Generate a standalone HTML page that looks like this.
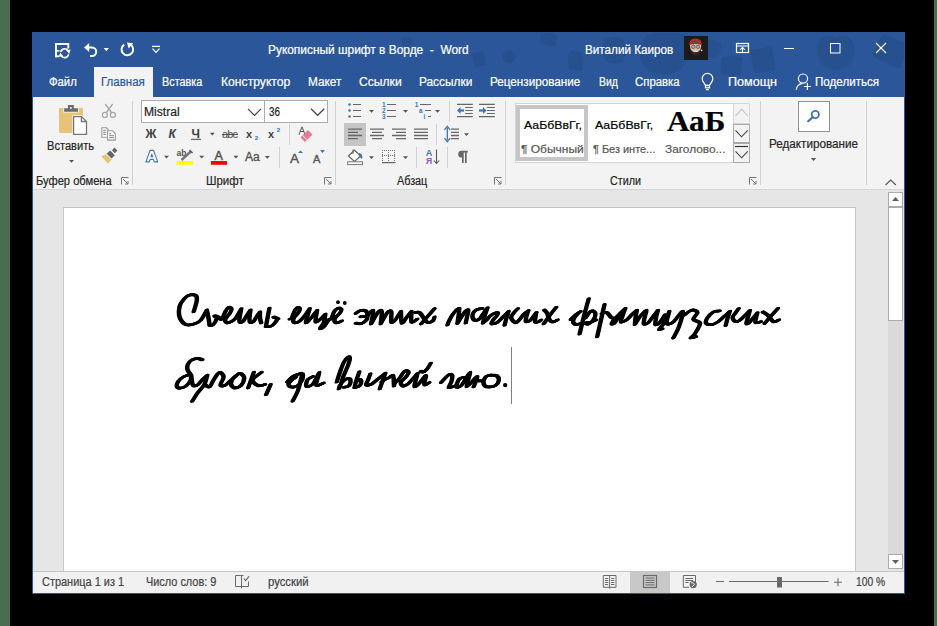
<!DOCTYPE html>
<html><head><meta charset="utf-8">
<style>
*{margin:0;padding:0;box-sizing:border-box}
html,body{width:937px;height:626px;overflow:hidden;background:#000}
body{position:relative;font-family:"Liberation Sans",sans-serif}
.a{position:absolute}
.t{position:absolute;white-space:nowrap;line-height:1;font-size:12px;transform-origin:0 0;-webkit-text-stroke:0.2px currentColor}
.w{color:#fff}
.k{color:#262626}
.g{color:#444}
svg{position:absolute;left:0;top:0;overflow:visible}
.hw{font-size:36px;font-weight:bold;font-style:italic;color:#000;font-family:"Liberation Serif",serif}
</style></head><body>
<div class="a" style="left:0;top:0;width:10px;height:626px;background:#4b6d4f"></div>
<div class="a" style="left:934px;top:0;width:3px;height:626px;background:#4b6d4f"></div>

<!-- window -->
<div class="a" style="left:32px;top:32px;width:873px;height:562px;background:#2b579a"></div>
<!-- doodles -->
<svg width="937" height="626" style="opacity:1">
<defs><clipPath id="tb"><rect x="33" y="33" width="871" height="64"/></clipPath></defs>
<g fill="#27508e" clip-path="url(#tb)">
 <rect x="540" y="33" width="17" height="12" rx="4" transform="rotate(12 548 39)"/>
 <path d="M568 55 Q570 50 576 51 Q583 52 583 58 L582 69 Q575 72 569 69 Z"/>
 <path d="M604 40 Q615 34 624 40 Q629 52 622 62 Q612 66 605 60 Q600 50 604 40 Z"/>
 <path d="M646 36 Q664 28 684 35 Q692 48 686 62 Q676 78 656 74 Q641 70 640 55 Q640 42 646 36 Z"/>
 <path d="M703 42 Q712 36 722 44 Q722 54 712 58 Q703 56 703 42 Z" opacity="0.8"/>
 <path d="M721 58 Q732 53 742 58 L741 74 Q731 78 721 74 Z"/>
 <rect x="752" y="48" width="22" height="24" rx="3" transform="rotate(-10 763 60)"/>
 <path d="M818 42 Q826 32 836 38 Q846 32 853 42 Q858 58 846 68 Q836 72 826 68 Q814 58 818 42 Z"/>
 <rect x="876" y="38" width="30" height="26" rx="3" transform="rotate(25 891 51)"/>
 <circle cx="407" cy="41.5" r="5.2"/>
 <rect x="473" y="52" width="12" height="14" rx="2" transform="rotate(-12 479 59)"/>
 <circle cx="509" cy="57" r="6.5"/>
 <rect x="569" y="54" width="12" height="15" rx="2" transform="rotate(-10 575 61)"/>
</g>
</svg>
<!-- ribbon -->
<div class="a" style="left:33px;top:97px;width:871px;height:92px;background:#f3f3f3"></div>
<div class="a" style="left:94px;top:67px;width:59px;height:30px;background:#f3f3f3"></div>
<div class="a" style="left:33px;top:189px;width:871px;height:1px;background:#d6d6d6"></div>
<!-- doc area -->
<div class="a" style="left:33px;top:190px;width:871px;height:381px;background:#e6e6e6"></div>
<div class="a" style="left:63px;top:207px;width:793px;height:364px;background:#fff;border:1px solid #c6c6c6;border-bottom:none"></div>
<!-- scrollbar -->
<div class="a" style="left:888px;top:192px;width:15px;height:377px;background:#dadada"></div>
<div class="a" style="left:888px;top:192px;width:15px;height:15px;background:#fff;border:1px solid #ababab"></div>
<div class="a" style="left:888px;top:207px;width:15px;height:114px;background:#fff;border:1px solid #ababab"></div>
<div class="a" style="left:888px;top:554px;width:15px;height:15px;background:#fff;border:1px solid #ababab"></div>
<!-- status bar -->
<div class="a" style="left:33px;top:571px;width:871px;height:1px;background:#c6c6c6"></div>
<div class="a" style="left:33px;top:572px;width:871px;height:21px;background:#f1f1f1"></div>
<div class="a" style="left:630px;top:572px;width:40px;height:21px;background:#c8c8c8"></div>

<!-- ribbon boxes -->
<div class="a" style="left:141px;top:100px;width:124px;height:23px;background:#fff;border:1px solid #ababab"></div>
<div class="a" style="left:264px;top:100px;width:64px;height:23px;background:#fff;border:1px solid #ababab"></div>
<div class="a" style="left:515px;top:103px;width:219px;height:60px;background:#fff;border:1px solid #d4d4d4"></div>
<div class="a" style="left:516px;top:105px;width:72px;height:56px;border:4px solid #c6c6c6"></div>
<div class="a" style="left:733px;top:103px;width:17px;height:21px;background:#f3f3f3;border:1px solid #d6d6d6"></div>
<div class="a" style="left:733px;top:124px;width:17px;height:19px;background:#f3f3f3;border:1px solid #a9a9a9"></div>
<div class="a" style="left:733px;top:143px;width:17px;height:20px;background:#f3f3f3;border:1px solid #a9a9a9"></div>
<div class="a" style="left:798px;top:101px;width:32px;height:31px;background:#fff;border:1px solid #8f8f8f"></div>
<div class="a" style="left:344px;top:123px;width:22px;height:23px;background:#c5c5c5"></div>

<!-- separators -->
<div class="a" style="left:132px;top:101px;width:1px;height:84px;background:#d0d0d0"></div>
<div class="a" style="left:335px;top:101px;width:1px;height:84px;background:#d0d0d0"></div>
<div class="a" style="left:505px;top:101px;width:1px;height:84px;background:#d0d0d0"></div>
<div class="a" style="left:760px;top:101px;width:1px;height:84px;background:#d0d0d0"></div>
<div class="a" style="left:866px;top:101px;width:1px;height:84px;background:#d0d0d0"></div>
<div class="a" style="left:289px;top:124px;width:1px;height:21px;background:#d0d0d0"></div>
<div class="a" style="left:279px;top:147px;width:1px;height:21px;background:#d0d0d0"></div>
<div class="a" style="left:436px;top:124px;width:1px;height:21px;background:#d0d0d0"></div>
<div class="a" style="left:449px;top:101px;width:1px;height:21px;background:#d0d0d0"></div>
<div class="a" style="left:416px;top:147px;width:1px;height:21px;background:#d0d0d0"></div>
<div class="a" style="left:447px;top:147px;width:1px;height:21px;background:#d0d0d0"></div>

<!-- ICONS -->
<svg width="937" height="626" id="icons">
<!-- QAT -->
<g stroke="#fff" fill="none" stroke-width="1.9">
 <path d="M56 57.2 V44 H68.3 V48.5"/>
 <path d="M55.2 56.3 H59"/>
 <path d="M57 50.8 H59.5" stroke-width="1.5"/>
 <path d="M60.8 52 A4 4 0 0 1 68.2 50.8" stroke-width="1.7"/>
 <path d="M68.6 54.4 A4 4 0 0 1 61.2 55.6" stroke-width="1.7"/>
</g>
<g fill="#fff">
 <path d="M66.2 50.2 L70.6 49.6 L69.2 54 Z"/>
 <path d="M63.2 56.2 L58.8 56.8 L60.2 52.4 Z"/>
</g>
<path d="M86 47.5 H92 A4.2 4.2 0 0 1 92 55.9 H90" stroke="#fff" stroke-width="2" fill="none"/>
<path d="M84 47.5 L89.2 43 L89.2 52 Z" fill="#fff"/>
<path d="M103.6 48 H109 L106.3 51 Z" fill="#fff"/>
<path d="M124.2 44.6 A5.8 5.8 0 1 0 130 44.3" stroke="#fff" stroke-width="2" fill="none"/>
<path d="M127 42.6 L133.2 43.2 L128.6 48.6 Z" fill="#fff"/>
<path d="M152 46.4 H160" stroke="#fff" stroke-width="1.3"/>
<path d="M152.5 48.7 L156 52.3 L159.5 48.7" stroke="#fff" stroke-width="1.2" fill="none"/>

<!-- avatar -->
<rect x="684" y="36" width="24" height="24" fill="#1e1a1c"/>
<path d="M689.8 44 Q690 49.5 692 51.5 Q695.5 54 699 51.5 Q701.2 49.5 701.3 44 Z" fill="#dcb79c"/>
<path d="M689.2 45 Q689 38.6 695.5 38.6 Q702 38.6 701.8 45 Q695.5 43.2 689.2 45 Z" fill="#a8302a"/>
<path d="M692.5 41.5 Q695.5 40.5 698.5 41.5 L698 43.5 H693 Z" fill="#5b4a48"/>
<circle cx="693.3" cy="46.8" r="1.7" fill="#9fb0bc" stroke="#3a3a3a" stroke-width="0.6"/>
<circle cx="697.9" cy="46.8" r="1.7" fill="#9fb0bc" stroke="#3a3a3a" stroke-width="0.6"/>
<path d="M691 50 Q693 52.5 695.5 52.2 Q698.5 52.5 700 50 L699.5 54 Q695.5 57.5 691.8 54 Z" fill="#2e2828"/>
<rect x="693.8" y="50.6" width="3.4" height="1" fill="#f0e8e0"/>
<circle cx="701.6" cy="50.3" r="0.9" fill="#eee"/>
<!-- ribbon display options -->
<rect x="736.5" y="43.5" width="12" height="9" stroke="#fff" stroke-width="1.2" fill="none"/>
<path d="M736.5 46 H748.5 M742.5 52.5 V47.8" stroke="#fff" stroke-width="1.1"/>
<path d="M740 50 L742.5 47.3 L745 50" stroke="#fff" stroke-width="1.1" fill="none"/>
<!-- window buttons -->
<path d="M784 48.5 H794" stroke="#fff" stroke-width="1"/>
<rect x="830.5" y="43.5" width="9.5" height="9.5" stroke="#fff" stroke-width="1" fill="none"/>
<path d="M876 43 L886 53 M886 43 L876 53" stroke="#fff" stroke-width="1.1"/>

<!-- lightbulb -->
<g stroke="#fff" stroke-width="1.2" fill="none">
 <path d="M705.6 85.3 L703.6 82.3 A5.3 5.3 0 1 1 711.4 82.3 L709.4 85.3 Z"/>
 <rect x="705.5" y="85.5" width="4" height="2.3"/>
 <path d="M706 89.6 H709"/>
</g>
<!-- person -->
<g stroke="#fff" stroke-width="1.2" fill="none">
 <circle cx="803" cy="78.6" r="4.6"/>
 <path d="M796.3 89.8 Q797 84.2 802.5 83.4"/>
 <path d="M807.4 83 V90 M803.9 86.5 H810.9"/>
</g>

<!-- clipboard -->
<rect x="59" y="108" width="24" height="25" rx="1.2" fill="#e9c27a"/>
<path d="M63.3 107.5 H78.8 V112.6 H63.3 Z" fill="#f3f3f3"/>
<path d="M64.2 108.3 H78 V111.8 H64.2 Z M68 105.1 H73.8 V108.5 H68 Z" fill="#6b6b6b"/>
<circle cx="70.9" cy="108" r="1" fill="#f3f3f3"/>
<path d="M72.3 115.3 H81.9 L87.8 121 V135.7 H72.3 Z" fill="#f3f3f3"/>
<path d="M73.6 116.6 H81.4 L86.5 121.5 V134.4 H73.6 Z" fill="#fff" stroke="#777" stroke-width="1.3"/>
<path d="M81.4 116.6 V121.5 H86.5" fill="none" stroke="#777" stroke-width="1.3"/>
<!-- scissors -->
<g stroke="#a8a8a8" stroke-width="1.3" fill="none">
 <path d="M105.3 104 L111.5 112.5 M112.6 104 L106.5 112.5"/>
 <circle cx="104.9" cy="114.9" r="2.5"/>
 <circle cx="112.9" cy="114.9" r="2.5"/>
</g>
<!-- copy -->
<g stroke="#9a9a9a" stroke-width="1.1" fill="#fff">
 <path d="M101.8 127.8 H106.5 L108 129.3 V137.2 H101.8 Z"/>
 <path d="M107.6 130.8 H112.6 L115.3 133.5 V140.1 H107.6 Z"/>
 <path d="M103.2 130.4 H106 M103.2 132.4 H106 M103.2 134.4 H106 M109.2 133.6 H111 M109.2 135.6 H114 M109.2 137.6 H114" fill="none"/>
</g>
<!-- format painter -->
<path d="M101.2 156.3 L105.8 154.6 L111.6 159.6 L108 163.8 Z" fill="#e9c27a"/>
<path d="M106.6 153.8 L110.2 150.6 L114.8 155.2 L111.6 158.6 Z" fill="#666"/>
<path d="M112 150.2 L114.6 147.6 L117.4 150.4 L114.8 153.2 Z" fill="#666"/>
<!-- paste dropdown -->
<path d="M69 160 H74 L71.5 162.7 Z" fill="#555"/>
<!-- dialog launchers -->
<g stroke="#777" stroke-width="1" fill="none">
 <path d="M121.5 184.5 V177.5 H128.5 M123 179 L128 184 M128 181 V184 H125"/>
 <path d="M324.5 184.5 V177.5 H331.5 M326 179 L331 184 M331 181 V184 H328"/>
 <path d="M494.5 184.5 V177.5 H501.5 M496 179 L501 184 M501 181 V184 H498"/>
 <path d="M749.5 184.5 V177.5 H756.5 M751 179 L756 184 M756 181 V184 H753"/>
</g>
<!-- collapse ribbon -->
<path d="M885.5 185 L890.7 180 L895.9 185" stroke="#555" stroke-width="1.1" fill="none"/>

<!-- font box chevrons -->
<path d="M248 108.8 L254.5 115.3 L261 108.8 M311 108.8 L317.6 115.3 L324.3 108.8" stroke="#444" stroke-width="1.2" fill="none"/>
<!-- B I U -->
<text x="145.6" y="138" font-family="Liberation Sans" font-weight="bold" font-size="12" fill="#404040">Ж</text>
<text x="168.6" y="138" font-family="Liberation Sans" font-weight="bold" font-style="italic" font-size="12" fill="#404040">К</text>
<text x="191.5" y="138" font-family="Liberation Sans" font-weight="bold" font-size="12" fill="#404040">Ч</text>
<path d="M191 139.3 H201" stroke="#404040" stroke-width="1"/>
<text x="222" y="138" font-family="Liberation Sans" font-size="11" fill="#505050" textLength="16">abc</text>
<path d="M222 134.5 H238" stroke="#505050" stroke-width="1"/>
<text x="246" y="137.8" font-family="Liberation Sans" font-weight="bold" font-size="11" fill="#404040">x</text>
<text x="254.8" y="139.8" font-family="Liberation Sans" font-weight="bold" font-size="6" fill="#2f6bb5">2</text>
<text x="268" y="137.8" font-family="Liberation Sans" font-weight="bold" font-size="11" fill="#404040">x</text>
<text x="276.8" y="132.2" font-family="Liberation Sans" font-weight="bold" font-size="6" fill="#2f6bb5">2</text>
<!-- clear formatting -->
<path d="M299 134.7 L302 126.8 L305 134.7 M300 131.5 H304" stroke="#555" stroke-width="1" fill="none"/>
<path d="M300.5 137.5 L308 130 L312.5 134.5 L305 142 Z" fill="#e17d92"/>
<path d="M302.6 135.4 L307 139.8" stroke="#f3f3f3" stroke-width="1"/>
<!-- row 2 font -->
<path d="M145.9 161.9 L150.1 150.4 H153.5 L157.7 161.9 H154.3 L153.4 159.4 H150.2 L149.3 161.9 Z M151 156.7 H152.6 L151.8 154.2 Z" fill="#fff" stroke="#3f73b7" stroke-width="1.1" stroke-linejoin="round" fill-rule="evenodd"/>
<text x="176.6" y="155.8" font-family="Liberation Sans" font-weight="bold" font-size="8.5" fill="#555">ab</text>
<path d="M181.5 160 L190.8 151.5" stroke="#777" stroke-width="2.4"/>
<path d="M189.5 150 L192.5 153" stroke="#555" stroke-width="1.5"/>
<rect x="176.8" y="161" width="16.3" height="3.8" fill="#ffff00"/>
<text x="214.4" y="160.2" font-family="Liberation Sans" font-size="12.5" fill="#555" stroke="#555" stroke-width="0.5">A</text>
<rect x="211" y="161" width="16" height="3.8" fill="#f00"/>
<text x="245" y="161" font-family="Liberation Sans" font-size="12" fill="#555" stroke="#555" stroke-width="0.35">Aa</text>
<text x="290" y="162.7" font-family="Liberation Sans" font-size="13.5" fill="#555" stroke="#555" stroke-width="0.4">A</text>
<path d="M298 153.1 L300.5 150.6 L303 153.1 Z" fill="#3f73b7"/>
<text x="313" y="162.7" font-family="Liberation Sans" font-size="11" fill="#555" stroke="#555" stroke-width="0.4">A</text>
<path d="M320.1 149.9 L325 149.9 L322.5 152.9 Z" fill="#3f73b7"/>
<!-- dropdown triangles -->
<g fill="#555">
 <path d="M209.9 132.8 H214.8 L212.35 135.6 Z"/>
 <path d="M164 155.8 H169 L166.5 158.6 Z"/>
 <path d="M199.2 155.8 H204.2 L201.7 158.6 Z"/>
 <path d="M233.4 155.8 H238.4 L235.9 158.6 Z"/>
 <path d="M264.8 156 H269.8 L267.3 158.8 Z"/>
 <path d="M369 110 H374 L371.5 112.8 Z"/>
 <path d="M403 110 H408 L405.5 112.8 Z"/>
 <path d="M435 110 H440 L437.5 112.8 Z"/>
 <path d="M464 133.3 H469 L466.5 136.1 Z"/>
 <path d="M369 156.3 H374 L371.5 159.1 Z"/>
 <path d="M403 156.3 H408 L405.5 159.1 Z"/>
 <path d="M810.8 158 H816.2 L813.5 160.9 Z"/>
</g>
<!-- bullets -->
<g fill="#3f73b7">
 <circle cx="349.5" cy="104.5" r="1.3"/><circle cx="349.5" cy="110.5" r="1.3"/><circle cx="349.5" cy="116.5" r="1.3"/>
</g>
<g stroke="#666" stroke-width="1.1">
 <path d="M353 104.5 H361 M353 110.5 H361 M353 116.5 H361"/>
 <path d="M387 104.5 H396 M387 110.5 H396 M387 116.5 H396"/>
 <path d="M420 104.5 H431 M425 110.5 H431 M428 116.5 H431"/>
</g>
<g font-family="Liberation Sans" font-weight="bold" font-size="6.5" fill="#3f73b7">
 <text x="382" y="107">1</text><text x="382" y="113">2</text><text x="382" y="119">3</text>
 <text x="414.8" y="107">1</text><text x="419" y="113">a</text><text x="423.5" y="119">i</text>
</g>
<!-- alignment -->
<g stroke="#666" stroke-width="1.3">
 <path d="M348 129.2 H362 M348 132.4 H358 M348 135.5 H362 M348 138.6 H358"/>
 <path d="M370 129.2 H384 M372 132.4 H382 M370 135.5 H384 M372 138.6 H382"/>
 <path d="M392 129.2 H406 M396 132.4 H406 M392 135.5 H406 M396 138.6 H406"/>
 <path d="M414 129.2 H428 M414 132.4 H428 M414 135.5 H428 M414 138.6 H428"/>
 <path d="M451 129.2 H459 M451 132.4 H459 M451 135.5 H459 M451 138.6 H459"/>
</g>
<!-- line spacing arrows -->
<path d="M447.3 127.5 V140.5" stroke="#3f73b7" stroke-width="1.3"/>
<path d="M444.5 129.8 L447.3 126.2 L450.1 129.8 M444.5 138.2 L447.3 141.8 L450.1 138.2" stroke="#3f73b7" stroke-width="1.3" fill="none"/>
<!-- indents -->
<g stroke="#666" stroke-width="1.2">
 <path d="M457 104.4 H472.8 M465.2 107.5 H472.8 M465.2 110.5 H472.8 M465.2 113.5 H472.8 M457 116.6 H472.8"/>
 <path d="M479 104.4 H494.8 M487 107.5 H494.8 M487 110.5 H494.8 M487 113.5 H494.8 M479 116.6 H494.8"/>
</g>
<path d="M459 110.5 H464" stroke="#3f73b7" stroke-width="2.2"/>
<path d="M457 110.5 L460.5 107 L460.5 114 Z" fill="#3f73b7"/>
<path d="M479 110.5 H484" stroke="#3f73b7" stroke-width="2.2"/>
<path d="M486.5 110.5 L483 107 L483 114 Z" fill="#3f73b7"/>
<!-- shading -->
<path d="M348.5 156 L354.5 150.2 L360.5 156 L354.5 161.5 Z" stroke="#666" stroke-width="1.2" fill="#fff"/>
<path d="M353 149.5 V154" stroke="#666" stroke-width="1.1"/>
<path d="M359 153 Q363.5 154 362 159 Q360 157.5 359 156 Z" fill="#3f73b7"/>
<rect x="347.7" y="161.8" width="14.8" height="2.8" stroke="#777" stroke-width="1" fill="#fff"/>
<!-- borders -->
<g stroke="#777" stroke-width="1" stroke-dasharray="1 1" fill="none">
 <path d="M382 150.5 H395 M382 155.5 H395 M382.5 150 V161 M388.5 150 V161 M394.5 150 V161"/>
</g>
<rect x="382" y="162" width="13.5" height="1.2" fill="#666"/>
<!-- sort -->
<text x="425.7" y="155.8" font-family="Liberation Sans" font-weight="bold" font-size="9" fill="#3f73b7">A</text>
<text x="425.7" y="163.7" font-family="Liberation Sans" font-weight="bold" font-size="9" fill="#8e5bb5">Я</text>
<path d="M436.5 149.5 V163.5 M433.8 160.5 L436.5 163.5 L439.2 160.5" stroke="#555" stroke-width="1.1" fill="none"/>
<!-- pilcrow -->
<path d="M467.8 150.8 H461.6 A3.4 3.4 0 0 0 461.6 157.6 H462 V163 H463.7 V152.4 H465 V163 H466.7 V152.4 H467.8 Z" fill="#666"/>
<!-- gallery scroll -->
<path d="M735.5 115.8 L741.6 109.2 L747.7 115.8" stroke="#c3c3c3" stroke-width="1.1" fill="none"/>
<path d="M735.5 130.4 L741.6 136.8 L747.7 130.4" stroke="#444" stroke-width="1.1" fill="none"/>
<path d="M735 146.5 H748" stroke="#333" stroke-width="1.2"/>
<path d="M735.5 151.4 L741.6 157.8 L747.7 151.4" stroke="#444" stroke-width="1.1" fill="none"/>
<!-- search -->
<circle cx="815.3" cy="114.5" r="3.6" stroke="#3f73b7" stroke-width="1.8" fill="none"/>
<path d="M812.6 117.2 L808.2 121.2" stroke="#3f73b7" stroke-width="2.2" stroke-linecap="round"/>
<!-- scrollbar arrows -->
<path d="M892 201 H899 L895.5 197 Z M892 560 H899 L895.5 564 Z" fill="#606060"/>

<!-- status bar icons -->
<g stroke="#6a6a6a" stroke-width="1" fill="none">
 <path d="M235.5 575.5 H241.5 V586.5 H235.5 Z M241.5 575.5 H243.5 M248.5 581.5 V586.5 H241.5 M241.5 586.5 V588.3"/>
 <path d="M243.8 578.6 L245.6 580.6 L249.2 576.2" stroke-width="1.1"/>
 <path d="M603.3 575.5 H616 V587.3 H603.3 Z M609.6 575.5 V588.5 M605 578.5 H608.2 M605 580.5 H608.2 M605 582.5 H608.2 M605 584.5 H608.2 M611 578.5 H614.3 M611 580.5 H614.3 M611 582.5 H614.3 M611 584.5 H614.3"/>
 <rect x="643.5" y="575.5" width="13" height="12" stroke-width="1.2"/>
 <path d="M645.5 578 H654.5 M645.5 580.3 H654.5 M645.5 582.6 H654.5 M645.5 584.9 H654.5"/>
 <path d="M689 587.3 H683.3 V575.5 H695.5 V582 M685.3 578.5 H693 M685.3 580.5 H693 M685.3 582.5 H688.5"/>
</g>
<circle cx="693.2" cy="584.6" r="3.6" fill="#6a6a6a"/>
<path d="M691 583 Q693 582 694.5 584 Q693 586.5 692 587" stroke="#f1f1f1" stroke-width="0.9" fill="none"/>
<path d="M716 581.5 H724 M729 581.5 H828.6 M834 582.3 H842 M838 578.3 V586.3" stroke="#6a6a6a" stroke-width="1.1"/>
<rect x="777" y="577" width="5" height="10.5" fill="#6a6a6a"/>
</svg>

<!-- title text -->
<div id="title" class="t w" style="left:267.6px;top:44px;transform:scaleX(0.992)">Рукописный шрифт в Ворде&nbsp; -&nbsp; Word</div>
<div id="user" class="t w" style="left:584.6px;top:44px;transform:scaleX(0.975)">Виталий Каиров</div>

<!-- tabs -->
<div id="tab0" class="t w" style="left:48.6px;top:76px;transform:scaleX(0.940)">Файл</div>
<div id="tab1" class="t" style="left:100.6px;top:76px;color:#2b579a;transform:scaleX(0.960)">Главная</div>
<div id="tab2" class="t w" style="left:162.4px;top:76px;transform:scaleX(0.904)">Вставка</div>
<div id="tab3" class="t w" style="left:221.0px;top:76px;transform:scaleX(1.013)">Конструктор</div>
<div id="tab4" class="t w" style="left:308.0px;top:76px;transform:scaleX(0.985)">Макет</div>
<div id="tab5" class="t w" style="left:359.0px;top:76px;transform:scaleX(1.010)">Ссылки</div>
<div id="tab6" class="t w" style="left:419.0px;top:76px;transform:scaleX(0.989)">Рассылки</div>
<div id="tab7" class="t w" style="left:490.4px;top:76px;transform:scaleX(0.974)">Рецензирование</div>
<div id="tab8" class="t w" style="left:598.8px;top:76px;transform:scaleX(0.868)">Вид</div>
<div id="tab9" class="t w" style="left:635.0px;top:76px;transform:scaleX(0.948)">Справка</div>
<div id="tab10" class="t w" style="left:727.6px;top:76px;transform:scaleX(1.049)">Помощн</div>
<div id="tab11" class="t w" style="left:815.0px;top:76px;transform:scaleX(0.968)">Поделиться</div>

<!-- ribbon labels -->
<div id="paste" class="t k" style="left:47.0px;top:140px;transform:scaleX(0.925)">Вставить</div>
<div id="g1" class="t k" style="left:36.0px;top:175px;transform:scaleX(0.928)">Буфер обмена</div>
<div id="g2" class="t k" style="left:206.4px;top:175px;transform:scaleX(0.953)">Шрифт</div>
<div id="g3" class="t k" style="left:396.9px;top:175px;transform:scaleX(0.900)">Абзац</div>
<div id="g4" class="t k" style="left:609.8px;top:175px;transform:scaleX(0.894)">Стили</div>
<div id="edit" class="t k" style="left:768.8px;top:138px;transform:scaleX(0.973)">Редактирование</div>
<div id="fname" class="t" style="left:144.0px;top:106px;color:#222;transform:scaleX(1.011)">Mistral</div>
<div id="fsize" class="t" style="left:268.7px;top:106px;color:#222;transform:scaleX(0.821)">36</div>
<div id="st1" class="t" style="left:523.9px;top:120px;color:#000;font-size:11.4px;transform:scaleX(1.078)">АаБбВвГг,</div>
<div id="st2" class="t" style="left:595.3px;top:120px;color:#000;font-size:11.4px;transform:scaleX(1.083)">АаБбВвГг,</div>
<div id="st1b" class="t" style="left:520.6px;top:144px;color:#555;font-size:11.4px;transform:scaleX(1.053)">¶ Обычный</div>
<div id="st2b" class="t" style="left:593.4px;top:144px;color:#555;font-size:11.4px;transform:scaleX(0.960)">¶ Без инте...</div>
<div id="st3b" class="t" style="left:664.8px;top:144px;color:#555;font-size:11.4px;transform:scaleX(1.041)">Заголово...</div>
<div id="st3" class="t" style="left:667.4px;top:106px;color:#000;font-family:'Liberation Serif',serif;font-weight:bold;font-size:30px;transform:scaleX(1.038)">АаБ</div>

<!-- status -->
<div id="s1" class="t g" style="left:42.0px;top:576px;transform:scaleX(0.913)">Страница 1 из 1</div>
<div id="s2" class="t g" style="left:145.6px;top:576px;transform:scaleX(0.909)">Число слов: 9</div>
<div id="s3" class="t g" style="left:267.8px;top:576px;transform:scaleX(0.942)">русский</div>
<div id="s4" class="t g" style="left:855.6px;top:576px;transform:scaleX(0.856)">100 %</div>

<!-- document text -->
<div id="doc" class="a" style="left:0;top:0">
<svg width="937" height="626" id="hw">
<defs><path id="hwp" d="M193.7 311.7 C194.2 310.1 196.0 304.5 196.5 302.0 C197.0 299.5 197.0 297.7 196.5 296.5 C196.0 295.3 195.0 294.9 193.5 294.8 C192.0 294.7 189.4 294.6 187.3 296.0 C185.2 297.4 182.4 300.7 181.0 303.0 C179.6 305.3 179.2 307.5 179.0 310.0 C178.8 312.5 178.8 315.8 180.0 318.2 C181.2 320.6 183.5 323.7 186.1 324.6 C188.7 325.5 193.0 324.4 195.5 323.5 C198.0 322.6 199.4 321.8 201.3 319.5 C203.2 317.2 205.9 311.6 206.8 310.0 M206.8 310.0 C207.1 311.3 208.0 315.4 208.5 318.0 C209.0 320.6 209.4 324.1 209.6 325.3 M209.6 325.3 C210.2 325.2 211.8 325.9 213.0 324.8 C214.2 323.7 216.3 320.0 216.6 318.5 C216.8 317.0 214.2 316.0 214.5 315.8 C214.8 315.6 217.8 317.0 218.5 317.2 M218.5 317.2 C219.0 317.6 220.7 319.8 221.5 319.5 C222.3 319.2 222.8 317.2 223.6 315.7 C224.3 314.2 225.1 311.9 226.0 310.5 C226.9 309.1 227.9 307.4 228.8 307.2 C229.7 307.0 231.5 308.2 231.6 309.3 C231.7 310.4 230.4 312.4 229.5 313.8 C228.6 315.2 226.7 316.8 226.0 318.0 C225.3 319.2 224.9 320.4 225.3 321.2 C225.7 322.0 226.9 323.2 228.6 322.8 C230.3 322.4 233.2 320.9 235.3 318.6 C237.4 316.3 240.3 310.4 241.3 308.8 M241.3 308.8 C241.0 310.3 239.8 315.8 239.5 318.0 C239.2 320.2 239.2 321.4 239.8 322.0 C240.4 322.6 241.9 322.5 243.0 321.5 C244.1 320.5 245.2 317.9 246.5 316.0 C247.8 314.1 249.8 311.0 250.5 310.0 M250.5 310.0 C250.3 311.3 249.6 316.0 249.5 318.0 C249.4 320.0 249.3 321.4 250.0 322.0 C250.7 322.6 252.3 322.5 253.5 321.5 C254.7 320.5 255.9 317.6 257.0 316.0 C258.1 314.4 259.5 312.7 260.0 312.0 M260.0 312.0 C260.0 313.0 259.8 316.2 260.0 318.0 C260.2 319.8 261.0 322.1 261.2 322.9 M269.4 308.2 C268.8 311.2 266.5 323.4 265.9 326.4 M265.9 326.4 C266.9 326.3 269.9 327.0 271.8 325.8 C273.7 324.6 276.8 320.9 277.1 319.4 C277.4 317.9 273.3 317.1 273.5 317.0 C273.7 316.9 277.4 318.5 278.2 318.8 M289.7 319.0 C290.1 318.9 291.2 318.9 291.8 318.2 C292.4 317.4 292.5 316.0 293.1 314.5 C293.7 313.0 294.8 310.3 295.6 309.1 C296.4 307.9 297.3 307.4 298.0 307.4 C298.7 307.4 299.9 308.1 299.9 309.1 C299.9 310.1 298.7 312.3 297.8 313.6 C296.9 314.9 295.5 315.6 294.7 316.8 C293.9 318.0 293.0 319.7 293.1 320.7 C293.2 321.7 294.5 322.7 295.6 322.8 C296.7 322.9 298.2 322.3 299.7 321.1 C301.2 319.9 303.0 317.8 304.7 315.7 C306.4 313.6 308.9 309.8 309.7 308.6 M309.7 308.6 C309.1 310.9 305.8 320.7 305.9 322.4 C306.0 324.1 308.5 320.7 310.4 318.7 C312.3 316.7 316.0 311.8 317.1 310.4 M317.1 310.4 C316.9 312.3 315.1 320.1 315.6 321.6 C316.1 323.1 318.5 320.6 320.1 319.4 C321.7 318.2 324.4 315.1 325.3 314.2 M325.3 314.2 C325.1 315.6 324.7 320.0 323.8 322.4 C322.9 324.8 320.1 327.6 320.1 328.4 C320.1 329.1 322.3 328.4 323.8 326.9 C325.3 325.4 327.8 320.8 329.1 319.4 C330.4 318.0 330.8 319.9 331.5 318.8 C332.2 317.7 332.9 314.2 333.6 312.7 C334.4 311.1 335.1 310.3 336.0 309.5 C336.9 308.7 337.9 308.0 338.8 308.0 C339.7 308.0 341.3 308.8 341.4 309.7 C341.5 310.6 340.5 312.2 339.5 313.5 C338.5 314.8 336.3 316.2 335.5 317.5 C334.7 318.8 334.2 320.1 334.5 321.0 C334.8 321.9 336.1 322.8 337.3 322.8 C338.5 322.8 341.1 321.2 341.8 320.9 M355.8 313.4 C356.6 312.9 358.9 310.8 360.6 310.5 C362.4 310.2 365.2 310.4 366.3 311.4 C367.4 312.4 367.5 314.9 367.5 316.3 C367.5 317.8 367.3 318.9 366.3 320.1 C365.3 321.3 363.2 323.0 361.5 323.5 C359.8 324.0 356.8 323.2 355.8 323.2 M360.6 316.7 C361.7 316.6 365.9 316.4 367.0 316.3 M367.0 316.3 C368.0 315.3 372.3 309.2 373.0 310.5 C373.7 311.8 371.4 321.7 371.1 323.9 M371.1 323.9 C372.2 322.0 376.1 314.5 377.9 312.4 C379.7 310.3 381.2 309.5 381.7 311.4 C382.2 313.3 380.9 321.8 380.7 323.9 M380.7 323.9 C381.8 322.0 385.7 314.4 387.5 312.4 C389.3 310.4 390.7 310.3 391.3 311.9 C391.9 313.5 390.7 320.6 391.3 322.0 C391.9 323.4 393.5 321.9 395.1 320.1 C396.7 318.3 399.9 312.8 400.9 311.4 M400.9 311.4 C401.1 313.3 400.9 322.0 401.9 323.0 C402.9 324.0 405.1 319.1 406.7 317.2 C408.3 315.3 410.7 312.4 411.5 311.4 M411.5 311.4 C411.5 313.2 410.6 320.7 411.5 322.0 C412.4 323.3 416.2 319.6 417.2 319.1 M415.3 312.4 C416.1 312.5 418.1 311.4 420.0 313.0 C421.9 314.6 424.8 320.6 426.9 322.0 C429.0 323.4 431.3 321.9 432.6 321.1 C433.9 320.3 434.2 317.7 434.5 317.0 M434.5 308.6 C432.3 311.2 423.3 321.3 421.1 323.9 M447.5 325.0 C447.8 324.3 448.1 322.8 449.0 321.0 C449.9 319.2 451.4 316.1 453.0 314.0 C454.6 311.9 457.7 308.7 458.7 308.4 C459.7 308.1 459.2 309.5 459.0 312.0 C458.8 314.5 457.7 321.6 457.4 323.5 M457.4 323.5 C458.2 322.2 460.5 318.2 462.0 316.0 C463.5 313.8 465.4 311.2 466.5 310.3 C467.6 309.4 468.2 309.4 468.3 310.5 C468.4 311.6 467.4 314.9 467.0 317.0 C466.6 319.1 466.0 322.0 465.8 323.0 M482.4 308.6 C481.5 308.8 478.5 308.8 477.0 309.5 C475.5 310.2 473.9 311.6 473.2 313.0 C472.5 314.4 472.3 316.7 472.8 318.0 C473.3 319.3 474.8 320.5 476.0 320.6 C477.2 320.7 478.9 319.5 480.0 318.5 C481.1 317.5 481.1 316.6 482.4 314.8 C483.6 313.0 486.6 309.0 487.5 307.8 M487.5 307.8 C487.1 309.0 485.8 312.4 485.0 315.0 C484.2 317.6 483.3 321.8 483.0 323.1 M483.0 323.1 C483.7 322.5 485.8 320.7 487.0 319.5 C488.2 318.3 488.8 317.2 490.1 316.1 C491.4 315.0 493.7 313.5 495.0 313.0 C496.3 312.5 497.5 312.5 497.8 312.9 C498.1 313.3 497.7 314.4 497.0 315.5 C496.3 316.6 494.4 318.2 493.5 319.5 C492.6 320.8 491.1 322.8 491.4 323.5 C491.6 324.2 493.9 323.8 495.0 323.5 C496.1 323.2 496.7 323.0 498.0 321.9 C499.3 320.8 501.2 318.8 503.0 317.0 C504.8 315.2 507.7 312.2 508.6 311.3 M508.6 311.3 C508.2 312.4 507.2 315.7 506.5 318.0 C505.8 320.3 504.9 324.0 504.6 325.2 M517.9 308.6 C517.2 309.2 515.1 311.1 514.0 312.5 C512.9 313.9 511.3 315.8 511.2 317.2 C511.1 318.6 512.3 320.3 513.2 321.2 C514.1 322.1 515.4 322.9 516.5 322.5 C517.6 322.1 518.8 320.4 520.0 319.0 C521.2 317.6 522.6 315.4 524.0 314.0 C525.4 312.6 527.7 311.2 528.4 310.6 M528.4 310.6 C528.1 311.5 526.9 314.2 526.5 316.0 C526.1 317.8 525.4 320.3 525.8 321.2 C526.2 322.1 527.9 321.9 529.1 321.2 C530.3 320.5 531.8 318.4 533.0 317.0 C534.2 315.6 535.8 313.2 536.4 312.5 M536.4 312.5 C536.2 313.2 535.7 315.4 535.5 317.0 C535.3 318.6 534.7 321.1 535.1 321.9 C535.5 322.7 537.0 322.3 538.0 322.0 C539.0 321.7 540.5 320.3 541.0 320.0 M544.3 310.0 C544.8 310.5 546.1 311.4 547.0 313.0 C547.9 314.6 548.6 318.4 549.6 319.9 C550.6 321.4 551.7 322.0 553.0 322.0 C554.3 322.0 556.8 320.2 557.6 319.9 M556.2 307.3 C555.2 308.6 552.1 312.2 550.0 315.0 C547.9 317.8 544.8 322.3 543.7 323.8 M588.7 298.8 C587.9 301.7 585.5 310.1 584.0 316.0 C582.5 321.9 580.3 331.0 579.6 334.0 M570.8 319.5 C571.6 318.8 573.9 316.3 575.5 315.0 C577.1 313.7 580.1 311.8 580.5 311.5 C580.9 311.2 579.1 312.3 578.0 313.5 C576.9 314.7 574.8 316.9 574.0 318.5 C573.2 320.1 573.0 322.0 573.5 323.0 C574.0 324.0 575.6 324.5 577.0 324.5 C578.4 324.5 581.2 323.2 582.0 323.0 M585.6 318.0 C586.2 317.2 588.0 314.2 589.0 313.0 C590.0 311.8 590.8 310.7 591.9 310.8 C593.0 310.9 595.2 312.1 595.4 313.6 C595.6 315.1 594.5 318.1 593.3 319.9 C592.1 321.6 589.7 323.6 588.4 324.1 C587.1 324.6 585.3 323.0 585.6 322.7 C585.9 322.4 588.3 322.9 590.0 322.5 C591.7 322.1 595.0 320.4 596.0 320.0 M604.5 304.4 C603.9 307.0 602.2 314.6 601.0 320.0 C599.8 325.4 597.8 334.0 597.2 336.8 M601.7 313.6 C602.2 313.4 603.5 312.6 604.5 312.5 C605.5 312.4 606.3 312.1 607.4 312.9 C608.5 313.7 610.0 316.2 610.9 317.1 C611.8 318.0 612.6 317.9 613.0 318.0 M625.3 308.4 C624.2 309.4 621.0 312.4 619.0 314.5 C617.0 316.6 614.2 319.4 613.0 321.0 C611.8 322.6 611.5 323.7 611.8 324.0 C612.0 324.3 613.2 324.3 614.5 323.0 C615.8 321.7 617.7 318.4 619.5 316.0 C621.3 313.6 624.3 309.8 625.3 308.6 M625.3 308.6 C624.8 309.8 623.2 313.8 622.5 316.0 C621.8 318.2 620.3 321.4 621.0 322.0 C621.7 322.6 624.8 321.1 626.6 319.9 C628.4 318.6 630.3 316.1 632.0 314.5 C633.7 312.9 636.0 311.0 636.8 310.3 M636.8 310.3 C636.6 311.6 635.8 315.6 635.5 318.0 C635.2 320.4 635.0 323.3 634.9 324.4 M634.9 324.4 C635.4 323.6 637.0 321.0 638.0 319.5 C639.0 318.0 639.6 317.0 641.0 315.5 C642.4 314.0 645.8 309.9 646.4 310.3 C647.0 310.7 644.9 315.8 644.5 318.0 C644.1 320.2 643.4 322.9 643.9 323.8 C644.4 324.7 646.4 324.1 647.7 323.1 C649.1 322.1 650.3 320.1 652.0 318.0 C653.7 315.9 656.9 311.6 657.9 310.3 M657.9 310.3 C657.6 311.6 656.4 315.6 656.0 318.0 C655.6 320.4 654.9 323.5 655.4 324.4 C655.9 325.2 657.6 324.7 659.2 323.1 C660.8 321.5 664.0 316.2 665.0 314.8 M665.0 314.8 C664.8 316.2 664.4 321.1 663.7 323.1 C663.0 325.1 661.8 325.9 661.0 327.0 C660.2 328.1 659.0 329.2 659.2 329.5 C659.4 329.8 661.9 329.0 662.4 328.9 M669.3 311.3 C668.9 313.3 666.0 321.5 666.7 323.3 C667.4 325.1 670.6 324.0 673.3 322.0 C676.0 320.0 681.8 310.4 682.7 311.3 C683.6 312.2 680.3 322.9 678.7 327.3 C677.1 331.8 674.2 336.2 673.3 338.0 M684.0 315.3 C685.3 314.4 689.8 310.4 692.0 310.0 C694.2 309.6 697.2 311.1 697.4 312.7 C697.6 314.2 693.0 317.5 693.4 319.3 C693.8 321.1 699.8 320.9 700.0 323.3 C700.2 325.8 696.2 331.6 694.7 334.0 C693.2 336.4 690.5 337.6 690.7 338.0 C690.9 338.4 695.1 336.9 696.0 336.7 M719.7 311.0 C718.7 311.1 715.6 310.7 713.5 311.9 C711.4 313.1 708.4 316.2 707.2 318.1 C706.0 320.0 705.4 322.4 706.3 323.5 C707.2 324.6 710.6 324.7 712.6 324.4 C714.6 324.1 716.6 322.8 718.5 321.5 C720.4 320.2 722.1 318.2 724.0 316.5 C725.9 314.8 728.9 312.2 729.9 311.3 M729.9 311.3 C729.5 312.5 728.2 316.1 727.5 318.5 C726.8 320.9 726.0 324.3 725.7 325.5 M738.7 308.6 C738.2 309.3 736.5 311.5 735.5 313.0 C734.5 314.5 732.6 316.0 732.6 317.4 C732.6 318.8 734.1 320.8 735.3 321.3 C736.4 321.8 737.9 321.5 739.5 320.5 C741.1 319.5 743.3 317.2 745.0 315.5 C746.7 313.8 749.1 311.3 749.9 310.5 M749.9 310.5 C749.6 311.6 748.6 314.9 748.0 317.0 C747.4 319.1 746.3 322.2 746.4 323.2 C746.5 324.2 747.4 324.3 748.7 323.2 C750.0 322.1 752.7 318.4 754.1 316.7 C755.5 315.0 756.9 313.4 757.4 312.8 M757.4 312.8 C757.2 313.7 756.3 316.4 756.0 318.0 C755.7 319.6 754.8 322.0 755.6 322.6 C756.4 323.2 760.1 321.9 761.0 321.7 M762.8 311.9 C763.7 312.5 766.4 313.9 768.2 315.5 C770.0 317.1 771.7 321.0 773.5 321.7 C775.3 322.4 778.0 320.2 778.9 319.9 M778.0 308.3 C776.8 309.6 773.2 313.5 771.0 316.0 C768.8 318.5 765.7 322.2 764.6 323.5 M202.3 359.8 C201.6 359.6 199.7 358.6 198.0 358.6 C196.3 358.6 193.7 358.9 192.0 359.8 C190.3 360.7 188.8 362.4 188.0 364.0 C187.2 365.6 187.1 367.8 187.5 369.5 C187.9 371.2 190.0 373.6 190.5 374.4 M190.5 374.4 C189.4 374.8 186.0 375.4 184.0 376.5 C182.0 377.6 179.7 379.4 178.5 381.0 C177.3 382.6 176.6 384.8 176.8 386.0 C177.1 387.2 178.5 388.2 180.0 388.2 C181.5 388.2 184.2 387.3 186.0 386.0 C187.8 384.7 189.6 382.2 190.5 380.5 C191.4 378.8 191.1 376.3 191.2 375.5 M191.2 375.5 C191.5 377.1 191.8 383.4 192.9 385.0 C194.0 386.6 195.8 386.0 197.5 385.0 C199.2 384.0 201.4 380.6 203.0 379.0 C204.6 377.4 206.6 375.8 207.3 375.2 M207.3 375.2 C206.8 376.7 206.0 381.4 204.4 384.4 C202.8 387.4 199.5 390.3 197.5 393.1 C195.5 395.9 193.1 399.9 192.2 401.3 M204.4 384.4 C205.2 384.8 208.1 387.6 209.5 387.0 C210.9 386.4 211.7 383.1 213.0 381.0 C214.3 378.9 215.9 376.1 217.1 374.6 C218.3 373.2 219.0 372.2 220.0 372.3 C221.0 372.4 222.4 374.1 223.0 375.0 C223.6 375.9 223.8 376.3 223.4 378.0 C223.0 379.7 220.3 383.7 220.5 385.0 C220.7 386.3 223.0 386.3 224.6 385.6 C226.2 384.9 228.1 382.6 230.0 381.0 C231.9 379.4 235.0 376.8 236.0 376.0 M238.8 373.6 C238.0 374.2 235.1 375.8 233.8 377.5 C232.5 379.2 230.8 382.3 231.0 384.0 C231.2 385.7 233.1 387.6 234.8 387.9 C236.5 388.1 239.4 387.1 241.0 385.5 C242.6 383.9 244.1 379.9 244.2 378.0 C244.3 376.1 242.4 374.7 241.5 374.0 C240.6 373.3 239.2 373.7 238.8 373.6 M253.8 372.2 C252.9 374.8 249.1 385.3 248.2 387.9 M261.6 372.2 C260.1 373.5 253.2 377.8 252.7 380.0 C252.1 382.2 256.2 384.9 258.3 385.6 C260.4 386.4 263.9 384.7 265.0 384.5 M270.6 384.5 C269.9 386.2 266.9 392.9 266.1 394.6 M287.3 381.9 C288.2 381.0 290.4 377.9 292.7 376.5 C295.0 375.1 299.8 373.8 301.2 373.3 M296.0 377.0 C294.8 378.0 290.0 381.4 289.0 383.0 C288.0 384.6 288.7 386.0 290.0 386.5 C291.3 387.0 294.8 387.3 296.9 386.2 C298.9 385.1 301.4 381.7 302.3 379.7 C303.2 377.7 303.0 372.6 302.3 374.4 C301.6 376.2 299.6 385.9 298.0 390.4 C296.4 394.8 293.6 399.3 292.7 401.1 M312.9 376.5 C312.0 377.0 308.7 378.1 307.6 379.7 C306.5 381.3 305.6 385.5 306.5 386.2 C307.4 386.9 310.8 386.3 312.9 384.0 C315.0 381.7 318.8 372.1 319.4 372.3 C319.9 372.5 315.5 383.3 316.2 385.1 C316.9 386.9 322.4 383.4 323.6 383.0 M336.8 382.0 C337.3 380.3 338.8 375.3 340.0 372.0 C341.2 368.7 342.6 364.5 344.0 362.0 C345.4 359.5 347.4 357.3 348.4 356.8 C349.4 356.3 349.9 357.5 349.8 359.0 C349.7 360.5 348.9 362.9 347.9 365.7 C346.8 368.5 344.7 372.9 343.5 376.0 C342.3 379.1 341.7 382.0 340.9 384.1 C340.1 386.2 339.1 388.1 338.8 388.9 M339.5 386.0 C340.2 385.1 342.2 381.9 343.6 380.7 C345.0 379.5 346.5 378.6 347.7 378.6 C348.9 378.6 350.5 379.4 350.6 380.7 C350.8 382.0 349.8 385.1 348.6 386.2 C347.4 387.3 344.4 387.0 343.6 387.2 M359.3 371.8 C358.8 373.2 357.3 377.4 356.5 380.0 C355.7 382.6 354.8 386.2 354.5 387.5 M355.5 382.5 C356.2 382.0 358.5 379.7 359.5 379.5 C360.5 379.3 361.3 380.4 361.3 381.5 C361.3 382.6 360.6 385.0 359.5 386.0 C358.4 387.0 355.8 387.2 355.0 387.5 M370.3 373.9 C369.9 374.9 368.7 378.2 368.0 380.0 C367.3 381.8 365.6 384.1 366.2 384.8 C366.8 385.5 369.6 385.1 371.6 384.1 C373.6 383.1 375.7 380.8 378.0 379.0 C380.3 377.2 384.1 374.2 385.3 373.2 M385.3 373.2 C384.8 374.5 383.4 378.4 382.5 381.0 C381.6 383.6 380.2 387.6 379.8 388.9 M381.5 382.0 C382.1 381.6 383.8 380.2 385.0 379.5 C386.2 378.8 387.4 378.5 388.7 377.8 C389.9 377.1 391.7 375.3 392.5 375.3 C393.3 375.3 393.4 376.9 393.6 378.0 C393.8 379.1 393.7 380.7 393.8 382.0 C393.9 383.3 394.0 385.3 394.0 386.0 M394.0 386.0 C394.1 385.5 394.2 384.1 394.8 383.2 C395.4 382.3 396.6 381.6 397.5 380.5 C398.4 379.4 399.5 378.1 400.4 376.9 C401.3 375.6 402.1 374.1 403.0 373.0 C403.9 371.9 405.1 370.7 406.0 370.6 C406.9 370.5 408.4 371.5 408.6 372.3 C408.8 373.1 407.7 374.5 407.0 375.5 C406.3 376.5 405.6 377.3 404.6 378.3 C403.7 379.3 401.9 380.5 401.3 381.5 C400.7 382.5 400.7 383.4 401.1 384.2 C401.5 385.0 402.6 386.3 403.9 386.1 C405.2 385.9 407.3 384.5 408.8 383.2 C410.3 381.9 411.5 380.1 413.0 378.5 C414.5 376.9 416.8 374.2 417.6 373.4 M417.6 373.4 C417.1 375.5 414.3 384.4 414.5 386.1 C414.7 387.9 416.8 385.7 418.7 383.9 C420.6 382.1 424.8 375.6 425.7 375.5 C426.6 375.4 424.3 381.6 424.3 383.2 C424.3 384.8 424.7 385.1 425.5 385.0 C426.3 384.9 428.7 382.9 429.3 382.5 M420.8 371.3 C421.3 371.4 422.5 372.5 423.6 372.0 C424.7 371.5 426.3 370.0 427.5 368.5 C428.7 367.0 430.2 364.1 430.7 363.2 M441.1 382.5 C442.4 381.2 447.0 375.9 448.8 374.8 C450.6 373.7 451.8 374.6 452.2 375.7 C452.6 376.8 452.0 379.6 451.4 381.6 C450.8 383.6 448.2 386.9 448.8 387.6 C449.4 388.3 453.8 386.2 454.8 385.9 M464.2 377.4 C463.4 377.7 460.4 377.5 459.1 379.1 C457.8 380.7 456.1 385.8 456.5 386.8 C456.9 387.8 459.3 387.5 461.6 385.1 C463.9 382.7 469.4 371.9 470.2 372.2 C471.0 372.5 465.6 386.1 466.7 386.8 C467.8 387.5 475.9 376.5 477.0 376.5 C478.1 376.5 474.2 385.1 473.6 386.8 M475.3 380.8 C476.3 380.8 480.3 380.8 481.3 380.8 M491.0 375.0 C490.2 375.2 487.2 375.4 486.0 376.5 C484.8 377.6 483.7 379.9 483.5 381.5 C483.3 383.1 484.0 385.1 485.0 386.0 C486.0 386.9 487.8 387.1 489.5 387.0 C491.2 386.9 493.9 386.6 495.5 385.5 C497.1 384.4 498.6 382.1 498.8 380.5 C499.0 378.9 498.0 376.7 496.8 375.8 C495.6 374.9 492.4 375.4 491.5 375.3"/></defs>
<g fill="none" stroke="#000" stroke-width="2.5" stroke-linecap="round" stroke-linejoin="round">
 <use href="#hwp" x="-1.0" y="0.25"/>
 <use href="#hwp" x="-0.3333333333333333" y="0.08333333333333333"/>
 <use href="#hwp" x="0.3333333333333333" y="-0.08333333333333333"/>
 <use href="#hwp" x="1.0" y="-0.25"/>
</g>
<g fill="#000"><circle cx="338" cy="302.2" r="1.9"/><circle cx="344.8" cy="303" r="1.9"/><circle cx="505.2" cy="385.1" r="2.2"/></g>
</svg>
<div class="a" style="left:511px;top:347px;width:1px;height:57px;background:#808080"></div>
</div>

</body></html>
